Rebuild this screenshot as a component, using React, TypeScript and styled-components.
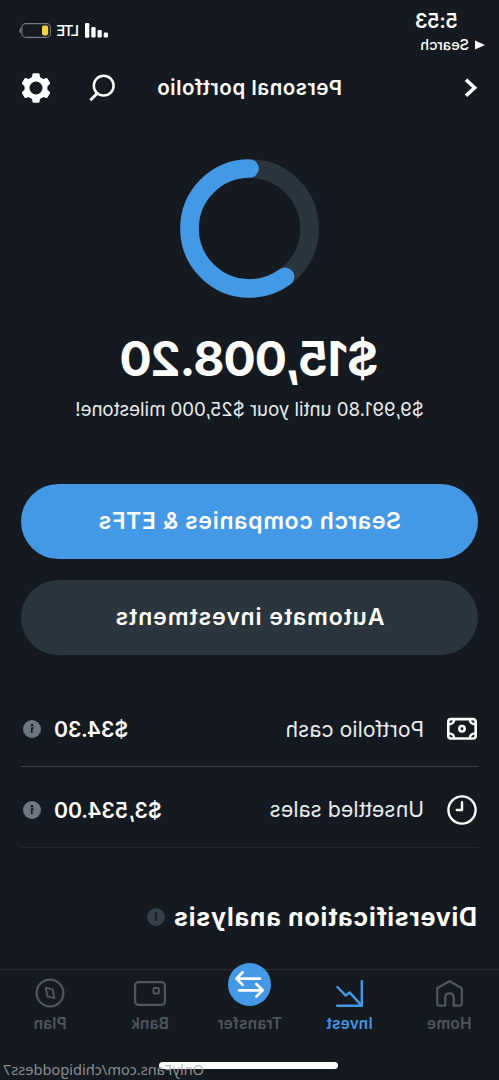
import React from "react";
import styled, { createGlobalStyle } from "styled-components";

const color = {
  bg: "#151a20",
  blue: "#4499e6",
  panel: "#2b353e",
  text: "#ffffff",
  soft: "#e9edf0",
  info: "#6c7781",
  infoDim: "#353f4a",
  line: "#3a4148",
  lineDim: "#22282e",
  muted: "#50565e",
};

const GlobalStyle = createGlobalStyle`
  html, body { margin: 0; padding: 0; background: ${color.bg}; }
  * { box-sizing: border-box; }
  svg { display: block; flex: none; overflow: visible; }
`;

const Screen = styled.div`
  position: relative;
  width: 499px;
  height: 1080px;
  overflow: hidden;
  display: flex;
  flex-direction: column;
  background: ${color.bg};
  color: ${color.text};
  font-family: Inter, "Liberation Sans", sans-serif;
  transform: scaleX(-1);
  white-space: nowrap;
`;

const StatusBar = styled.header`
  height: 60px;
  flex: none;
  display: flex;
  justify-content: space-between;
  padding: 9px 19px 0 14px;
`;

const Clock = styled.div`
  padding-left: 27px;
  font-size: 20px;
  line-height: 24px;
  font-weight: 600;
  letter-spacing: -0.4px;
`;

const BackTo = styled.div`
  display: flex;
  align-items: center;
  gap: 6px;
  font-size: 14.5px;
  line-height: 24px;
  font-weight: 500;
`;

const Signals = styled.div`
  display: flex;
  align-items: center;
  height: 15px;
  margin-top: 14px;
`;

const Network = styled.span`
  width: 22px;
  margin: 0 6px;
  font-size: 15px;
  line-height: 15px;
  font-weight: 500;
  letter-spacing: -1.6px;
`;

const TopBar = styled.div`
  height: 56px;
  flex: none;
  display: flex;
  align-items: center;
  padding: 0 21px;
`;

const Title = styled.h1`
  flex: 1;
  margin: 0 0 0 123px;
  font-size: 20.5px;
  line-height: 28px;
  font-weight: 600;
  letter-spacing: 0.55px;
`;

const TopActions = styled.div`
  display: flex;
  align-items: center;
  gap: 38px;
`;

const Summary = styled.section`
  height: 368px;
  flex: none;
  display: flex;
  flex-direction: column;
  align-items: center;
  padding-top: 43px;
`;

const Balance = styled.div`
  margin-top: 32px;
  font-size: 48px;
  line-height: 58px;
  font-weight: 700;
  letter-spacing: -1.2px;
`;

const Milestone = styled.div`
  margin-top: 8px;
  font-size: 18.6px;
  line-height: 26px;
  color: ${color.soft};
`;

const Actions = styled.div`
  flex: none;
  display: flex;
  flex-direction: column;
  gap: 21px;
  padding: 0 21px;
`;

const ActionButton = styled.button<{ $primary?: boolean }>`
  height: 75px;
  border: 0;
  padding: 0 0 1px;
  border-radius: 38px;
  background: ${(p) => (p.$primary ? color.blue : color.panel)};
  color: ${color.text};
  font: 600 23px/28px Inter, "Liberation Sans", sans-serif;
  letter-spacing: ${(p) => (p.$primary ? 0.65 : 1)}px;
`;

const Rows = styled.div`
  flex: none;
  margin-top: 37px;
  padding: 0 21px;
`;

const Row = styled.div<{ $last?: boolean }>`
  height: ${(p) => (p.$last ? 81 : 75)}px;
  display: flex;
  align-items: center;
  border-bottom: 1px solid ${(p) => (p.$last ? color.lineDim : color.line)};
  padding: ${(p) => (p.$last ? 5 : 0)}px 2px 0 1px;
`;

const RowLabel = styled.span`
  flex: 1;
  margin-left: 23px;
  font-size: 21.1px;
  letter-spacing: 0.12px;
  color: ${color.soft};
`;

const RowValue = styled.span`
  margin-right: 13px;
  font-size: 21.2px;
  font-weight: 600;
`;

const Section = styled.div`
  flex: 1;
  display: flex;
  align-items: flex-start;
  gap: 8px;
  padding: 53px 22px 0;
`;

const SectionTitle = styled.h2`
  margin: 0;
  font-size: 25px;
  line-height: 32px;
  font-weight: 700;
  letter-spacing: 0.75px;
`;

const SectionInfo = styled.span`
  margin-top: 7px;
`;

const TabBar = styled.nav`
  height: 111px;
  flex: none;
  display: flex;
  flex-direction: column;
  align-items: center;
  border-top: 1px solid #272d33;
`;

const Tabs = styled.div`
  width: 100%;
  display: flex;
`;

const Tab = styled.div<{ $active?: boolean }>`
  flex: 1 1 0;
  display: flex;
  flex-direction: column;
  align-items: center;
  padding-top: 8px;
  color: ${(p) => (p.$active ? color.blue : color.muted)};
`;

const TabIcon = styled.div<{ $raised?: boolean }>`
  height: 30px;
  display: flex;
  align-items: ${(p) => (p.$raised ? "flex-end" : "center")};
  padding-bottom: ${(p) => (p.$raised ? 2 : 0)}px;
`;

const TabLabel = styled.span`
  margin-top: 6px;
  font-size: 15.3px;
  line-height: 20px;
  font-weight: 600;
  letter-spacing: 0.3px;
`;

const HomeIndicator = styled.div`
  width: 179px;
  height: 7px;
  margin: 28px 0 0 1px;
  border-radius: 4px;
  background: #ffffff;
`;

const Watermark = styled.div`
  position: absolute;
  right: 3px;
  bottom: 1px;
  font: 400 14.6px/20px "Noto Sans", sans-serif;
  color: rgba(170, 173, 176, 0.8);
`;

const InfoIcon = ({ fill = color.info, size = 18 }: { fill?: string; size?: number }) => (
  <svg width={size} height={size} viewBox="0 0 18 18">
    <circle cx="9" cy="9" r="9" fill={fill} />
    <circle cx="9" cy="5.3" r="1.3" fill={color.bg} />
    <path d="M7.4 8h1.8v5" fill="none" stroke={color.bg} strokeWidth="1.7" />
  </svg>
);

const ProgressRing = () => {
  const r = 60;
  const length = 2 * Math.PI * r;
  return (
    <svg width="139" height="139" viewBox="0 0 139 139">
      <circle cx="69.5" cy="69.5" r={r} fill="none" stroke={color.panel} strokeWidth="18.6" />
      <circle
        cx="69.5"
        cy="69.5"
        r={r}
        fill="none"
        stroke={color.blue}
        strokeWidth="18.6"
        strokeLinecap="round"
        strokeDasharray={`${length * 0.6} ${length}`}
        transform="rotate(-90 69.5 69.5)"
      />
    </svg>
  );
};

const SearchIcon = () => (
  <svg width="26" height="28" viewBox="0 0 26 28" fill="none" stroke="#fff" strokeWidth="2.5">
    <circle cx="11.3" cy="11.7" r="9.9" />
    <path d="M17.7 19.3L24.6 26.3" strokeWidth="3" />
  </svg>
);

const GearIcon = () => (
  <svg width="30" height="30" viewBox="-15 -15 30 30">
    <circle r="9" fill="none" stroke="#fff" strokeWidth="5" />
    {[0, 60, 120, 180, 240, 300].map((a) => (
      <path
        key={a}
        d="M-4.3 -9.5L-3.5 -13.8Q-3.3 -14.7 -2.5 -14.7H2.5Q3.3 -14.7 3.5 -13.8L4.3 -9.5Z"
        fill="#fff"
        transform={`rotate(${a})`}
      />
    ))}
  </svg>
);

const CashIcon = () => (
  <svg width="30" height="22" viewBox="0 0 30 22" fill="none" stroke="#fff" strokeWidth="2.6">
    <rect x="1.3" y="1.1" width="27.4" height="19.4" rx="2.5" />
    <circle cx="15" cy="10.8" r="2.7" strokeWidth="2.5" />
    <path d="M7.2 1.3Q7.2 6.3 1.5 6.3M22.8 1.3Q22.8 6.3 28.5 6.3M7.2 20.3Q7.2 15.3 1.5 15.3M22.8 20.3Q22.8 15.3 28.5 15.3" strokeWidth="2.3" />
  </svg>
);

const ClockIcon = () => (
  <svg width="30" height="30" viewBox="0 0 30 30" fill="none" stroke="#fff" strokeWidth="2.4">
    <circle cx="15" cy="15" r="13.6" />
    <path d="M15 7.3V15H20.2" strokeLinecap="round" strokeLinejoin="round" />
  </svg>
);

const iconProps = {
  fill: "none",
  stroke: "currentColor",
  strokeWidth: 2.2,
  strokeLinecap: "round" as const,
  strokeLinejoin: "round" as const,
};

const HomeIcon = () => (
  <svg width="27" height="27" viewBox="0 0 27 27" {...iconProps}>
    <path d="M13.5 1.2L1.2 8.2V23.3Q1.2 25.7 3.6 25.7H9.3V17.5Q9.3 13.3 13.5 13.3T17.7 17.5V25.7H23.4Q25.8 25.7 25.8 23.3V8.2Z" />
  </svg>
);

const InvestIcon = () => (
  <svg width="27" height="27" viewBox="0 0 27 27" {...iconProps} strokeWidth={2.4}>
    <path d="M1.2 1.2V25.8H25.8M1.4 25.6L13.4 12.4L17.2 15.6L25.6 7" />
  </svg>
);

const TransferIcon = () => (
  <svg width="43" height="43" viewBox="0 0 43 43">
    <circle cx="21.5" cy="21.5" r="21.5" fill={color.blue} />
    <path
      d="M11 15.6H34M28.3 9.3L34.6 15.6L28.3 21.9M32 27.3H9M14.7 21L8.4 27.3L14.7 33.6"
      fill="none"
      stroke="#fff"
      strokeWidth="2.7"
      strokeLinecap="round"
      strokeLinejoin="round"
    />
  </svg>
);

const BankIcon = () => (
  <svg width="32" height="25" viewBox="0 0 32 25" {...iconProps}>
    <rect x="1.1" y="1.1" width="29.8" height="22.8" rx="3.5" />
    <rect x="7" y="7" width="5.5" height="5.5" rx="0.8" strokeWidth="1.9" />
  </svg>
);

const PlanIcon = () => (
  <svg width="30" height="30" viewBox="-15 -15 30 30" {...iconProps}>
    <circle r="13.4" />
    <path d="M4.3 -5.3L-2.5 -3.6L-4.6 5.2L2.4 3.5Z" strokeWidth="1.9" />
  </svg>
);

const tabs = [
  { label: "Home", icon: <HomeIcon /> },
  { label: "Invest", icon: <InvestIcon />, active: true },
  { label: "Transfer", icon: <TransferIcon />, raised: true },
  { label: "Bank", icon: <BankIcon /> },
  { label: "Plan", icon: <PlanIcon /> },
];

export default function App() {
  return (
    <>
      <GlobalStyle />
      <Screen>
        <StatusBar>
          <div>
            <Clock>5:53</Clock>
            <BackTo>
              <svg width="10" height="10" viewBox="0 0 10 10">
                <path d="M0 5L10 0.4V9.6Z" fill="#fff" />
              </svg>
              Search
            </BackTo>
          </div>
          <Signals>
            <svg width="23" height="15" viewBox="0 0 23 15" fill="#fff">
              <rect x="0" y="9.5" width="4.3" height="5" rx="1.2" />
              <rect x="6.2" y="7" width="4.3" height="7.5" rx="1.2" />
              <rect x="12.4" y="4" width="4.3" height="10.5" rx="1.2" />
              <rect x="18.7" y="0" width="4.3" height="14.8" rx="1.2" />
            </svg>
            <Network>LTE</Network>
            <svg width="32" height="15" viewBox="0 0 32 15">
              <rect x="0.6" y="0.6" width="28.5" height="13.8" rx="4" fill="none" stroke="#777b80" strokeWidth="1.1" />
              <rect x="2.8" y="2.6" width="6.2" height="9.8" rx="1.8" fill="#f5d24a" />
              <path d="M30.4 5.2Q32 7.5 30.4 9.8Z" fill="#777b80" stroke="#777b80" />
            </svg>
          </Signals>
        </StatusBar>
        <TopBar>
          <svg width="13" height="18" viewBox="0 0 13 18">
            <path d="M12 0.8L3.4 8.8L12 16.8" fill="none" stroke="#fff" strokeWidth="3.6" />
          </svg>
          <Title>Personal portfolio</Title>
          <TopActions>
            <SearchIcon />
            <GearIcon />
          </TopActions>
        </TopBar>
        <Summary>
          <ProgressRing />
          <Balance>$15,008.20</Balance>
          <Milestone>$9,991.80 until your $25,000 milestone!</Milestone>
        </Summary>
        <Actions>
          <ActionButton $primary>Search companies &amp; ETFs</ActionButton>
          <ActionButton>Automate investments</ActionButton>
        </Actions>
        <Rows>
          <Row>
            <CashIcon />
            <RowLabel>Portfolio cash</RowLabel>
            <RowValue>$34.30</RowValue>
            <InfoIcon />
          </Row>
          <Row $last>
            <ClockIcon />
            <RowLabel>Unsettled sales</RowLabel>
            <RowValue>$3,534.00</RowValue>
            <InfoIcon />
          </Row>
        </Rows>
        <Section>
          <SectionTitle>Diversification analysis</SectionTitle>
          <SectionInfo>
            <InfoIcon fill={color.infoDim} />
          </SectionInfo>
        </Section>
        <TabBar>
          <Tabs>
            {tabs.map((t) => (
              <Tab key={t.label} $active={t.active}>
                <TabIcon $raised={t.raised}>{t.icon}</TabIcon>
                <TabLabel>{t.label}</TabLabel>
              </Tab>
            ))}
          </Tabs>
          <HomeIndicator />
        </TabBar>
        <Watermark>OnlyFans.com/chibigoddess7</Watermark>
      </Screen>
    </>
  );
}
